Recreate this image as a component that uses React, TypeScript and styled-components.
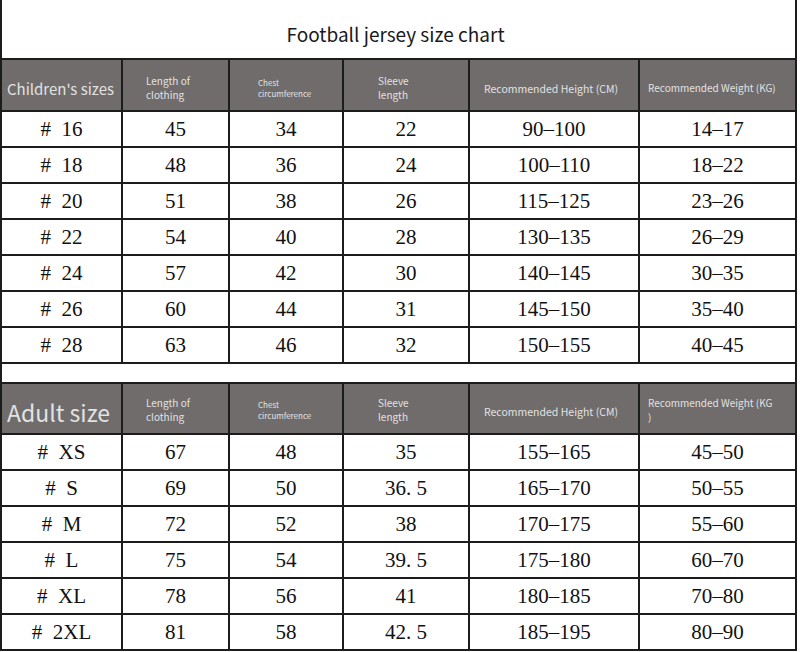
import React from "react";
import styled, { createGlobalStyle } from "styled-components";

const GlobalStyle = createGlobalStyle`
  body {
    margin: 0;
    background: #ffffff;
  }
`;

const Page = styled.div`
  width: 800px;
  height: 652px;
  background: #ffffff;
  overflow: hidden;
`;

const Sheet = styled.div`
  width: 797px;
`;

const Title = styled.h1`
  margin: 0;
  height: 58px;
  box-sizing: border-box;
  border-left: 2px solid #1c1c1c;
  border-right: 2px solid #1c1c1c;
  display: flex;
  align-items: center;
  justify-content: center;
  padding: 8px 6px 0 0;
  font-family: "Noto Sans CJK SC", "Noto Sans", sans-serif;
  font-size: 19px;
  font-weight: 400;
  color: #1a1a1a;
`;

const Table = styled.table`
  width: 797px;
  border-collapse: collapse;
  table-layout: fixed;
`;

const HeadRow = styled.tr<{ $h: number }>`
  height: ${(p) => p.$h}px;
`;

const Row = styled.tr`
  height: 36px;
`;

const Spacer = styled.td`
  height: 18px;
  padding: 0;
  border: 2px solid #1c1c1c;
  background: #ffffff;
`;

const HeadCell = styled.th<{ $pad: number; $size: number; $top: number }>`
  background: #706c6b;
  color: #e2e2e2;
  border: 2px solid #1c1c1c;
  text-align: left;
  vertical-align: middle;
  white-space: nowrap;
  overflow: hidden;
  padding: ${(p) => p.$top}px 0 0 ${(p) => p.$pad}px;
  font-family: "Noto Sans CJK SC", "Noto Sans", sans-serif;
  font-weight: 400;
  font-size: ${(p) => p.$size}px;
  line-height: ${(p) => Math.round(p.$size * 1.4)}px;
`;

const Cell = styled.td`
  border: 2px solid #1c1c1c;
  padding: 0;
  text-align: center;
  vertical-align: middle;
  font-family: "Liberation Serif", "DejaVu Serif", serif;
  font-size: 21px;
  line-height: 24px;
  color: #111111;
  white-space: pre;
`;

const widths = [121, 107, 114, 126, 170, 157];

const children = [
  ["16", "45", "34", "22", "90–100", "14–17"],
  ["18", "48", "36", "24", "100–110", "18–22"],
  ["20", "51", "38", "26", "115–125", "23–26"],
  ["22", "54", "40", "28", "130–135", "26–29"],
  ["24", "57", "42", "30", "140–145", "30–35"],
  ["26", "60", "44", "31", "145–150", "35–40"],
  ["28", "63", "46", "32", "150–155", "40–45"],
];

const adults = [
  ["XS", "67", "48", "35", "155–165", "45–50"],
  ["S", "69", "50", "36. 5", "165–170", "50–55"],
  ["M", "72", "52", "38", "170–175", "55–60"],
  ["L", "75", "54", "39. 5", "175–180", "60–70"],
  ["XL", "78", "56", "41", "180–185", "70–80"],
  ["2XL", "81", "58", "42. 5", "185–195", "80–90"],
];

function Header({ label, size, adult }: { label: string; size: number; adult?: boolean }) {
  const top = adult ? 2 : 6;
  return (
    <HeadRow $h={adult ? 51 : 52}>
      <HeadCell $pad={5} $size={size} $top={6}>
        {label}
      </HeadCell>
      <HeadCell $pad={23} $size={10} $top={top}>
        Length of
        <br />
        clothing
      </HeadCell>
      <HeadCell $pad={28} $size={8} $top={top}>
        Chest
        <br />
        circumference
      </HeadCell>
      <HeadCell $pad={34} $size={10} $top={top}>
        Sleeve
        <br />
        length
      </HeadCell>
      <HeadCell $pad={14} $size={10.5} $top={6}>
        Recommended Height (CM)
      </HeadCell>
      <HeadCell $pad={8} $size={10} $top={top}>
        {adult ? (
          <>
            Recommended Weight (KG
            <br />)
          </>
        ) : (
          "Recommended Weight (KG)"
        )}
      </HeadCell>
    </HeadRow>
  );
}

function Rows({ data }: { data: string[][] }) {
  return (
    <>
      {data.map((r) => (
        <Row key={r[0]}>
          <Cell>{"#  " + r[0]}</Cell>
          {r.slice(1).map((v, i) => (
            <Cell key={i}>{v}</Cell>
          ))}
        </Row>
      ))}
    </>
  );
}

export default function App() {
  return (
    <Page>
      <GlobalStyle />
      <Sheet>
        <Title>Football jersey size chart</Title>
        <Table>
          <colgroup>
            {widths.map((w, i) => (
              <col key={i} style={{ width: w }} />
            ))}
          </colgroup>
          <tbody>
            <Header label="Children's sizes" size={15} />
            <Rows data={children} />
            <tr>
              <Spacer colSpan={6} />
            </tr>
            <Header label="Adult size" size={23} adult />
            <Rows data={adults} />
          </tbody>
        </Table>
      </Sheet>
    </Page>
  );
}
